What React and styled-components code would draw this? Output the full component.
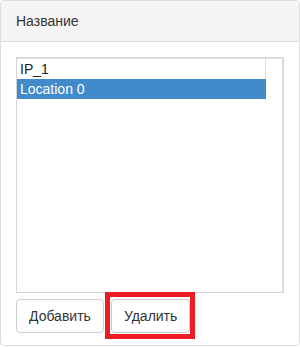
import React, { useState } from "react";
import styled, { createGlobalStyle } from "styled-components";

const GlobalStyle = createGlobalStyle`
  html, body {
    margin: 0;
    padding: 0;
    background: #fff;
  }
  body {
    font-family: "Liberation Sans", Arial, Helvetica, sans-serif;
    font-size: 14px;
    color: #333;
  }
`;

const Panel = styled.div`
  width: 300px;
  height: 346px;
  box-sizing: border-box;
  border: 1px solid #ddd;
  border-radius: 4px;
  background: #fff;
  display: flex;
  flex-direction: column;
  overflow: hidden;
`;

const Heading = styled.div`
  padding: 10px 15px;
  line-height: 20px;
  font-size: 14px;
  color: #333;
  background: #f5f5f5;
  border-bottom: 1px solid #ddd;
`;

const Body = styled.div`
  flex: 1;
  display: flex;
  flex-direction: column;
  padding: 15px 15px 12px;
`;

const ListBox = styled.div`
  height: 236px;
  box-sizing: border-box;
  border: 1px solid #d6d6d6;
  box-shadow: inset 0 1px 0 #e2e2e2, inset -1px 0 0 #e2e2e2;
  padding: 1px 17px 0 0;
  display: flex;
  flex-direction: column;
`;

const Item = styled.div`
  height: 20px;
  line-height: 20px;
  padding-left: 3px;
  font-size: 14px;
  color: ${(p) => (p.$selected ? "#fff" : "#222")};
  background: ${(p) => (p.$selected ? "#428bca" : "transparent")};
  box-shadow: ${(p) => (p.$edge ? "inset -1px 0 0 #dcdcdc" : "none")};
  cursor: default;
`;

const Actions = styled.div`
  display: flex;
  gap: 7px;
  margin-top: 6px;
`;

const Button = styled.button`
  font-family: inherit;
  font-size: 14px;
  line-height: 20px;
  color: #333;
  background: #fff;
  border: 1px solid #ccc;
  border-radius: 4px;
  padding: 6px 12px;
  height: 34px;
  cursor: pointer;
`;

const Marked = styled.span`
  position: relative;
  display: inline-flex;
`;

const Frame = styled.span`
  position: absolute;
  top: -7px;
  left: -6px;
  right: -5px;
  bottom: -6px;
  border: 5px solid #ed1c24;
  pointer-events: none;
`;

const items = ["IP_1", "Location 0"];

export default function App() {
  const [selected, setSelected] = useState(1);

  return (
    <>
      <GlobalStyle />
      <Panel>
        <Heading>Название</Heading>
        <Body>
          <ListBox>
            {items.map((name, i) => (
              <Item
                key={name}
                $selected={i === selected}
                $edge={i === 0}
                onClick={() => setSelected(i)}
              >
                {name}
              </Item>
            ))}
          </ListBox>
          <Actions>
            <Button>Добавить</Button>
            <Marked>
              <Button>Удалить</Button>
              <Frame />
            </Marked>
          </Actions>
        </Body>
      </Panel>
    </>
  );
}
